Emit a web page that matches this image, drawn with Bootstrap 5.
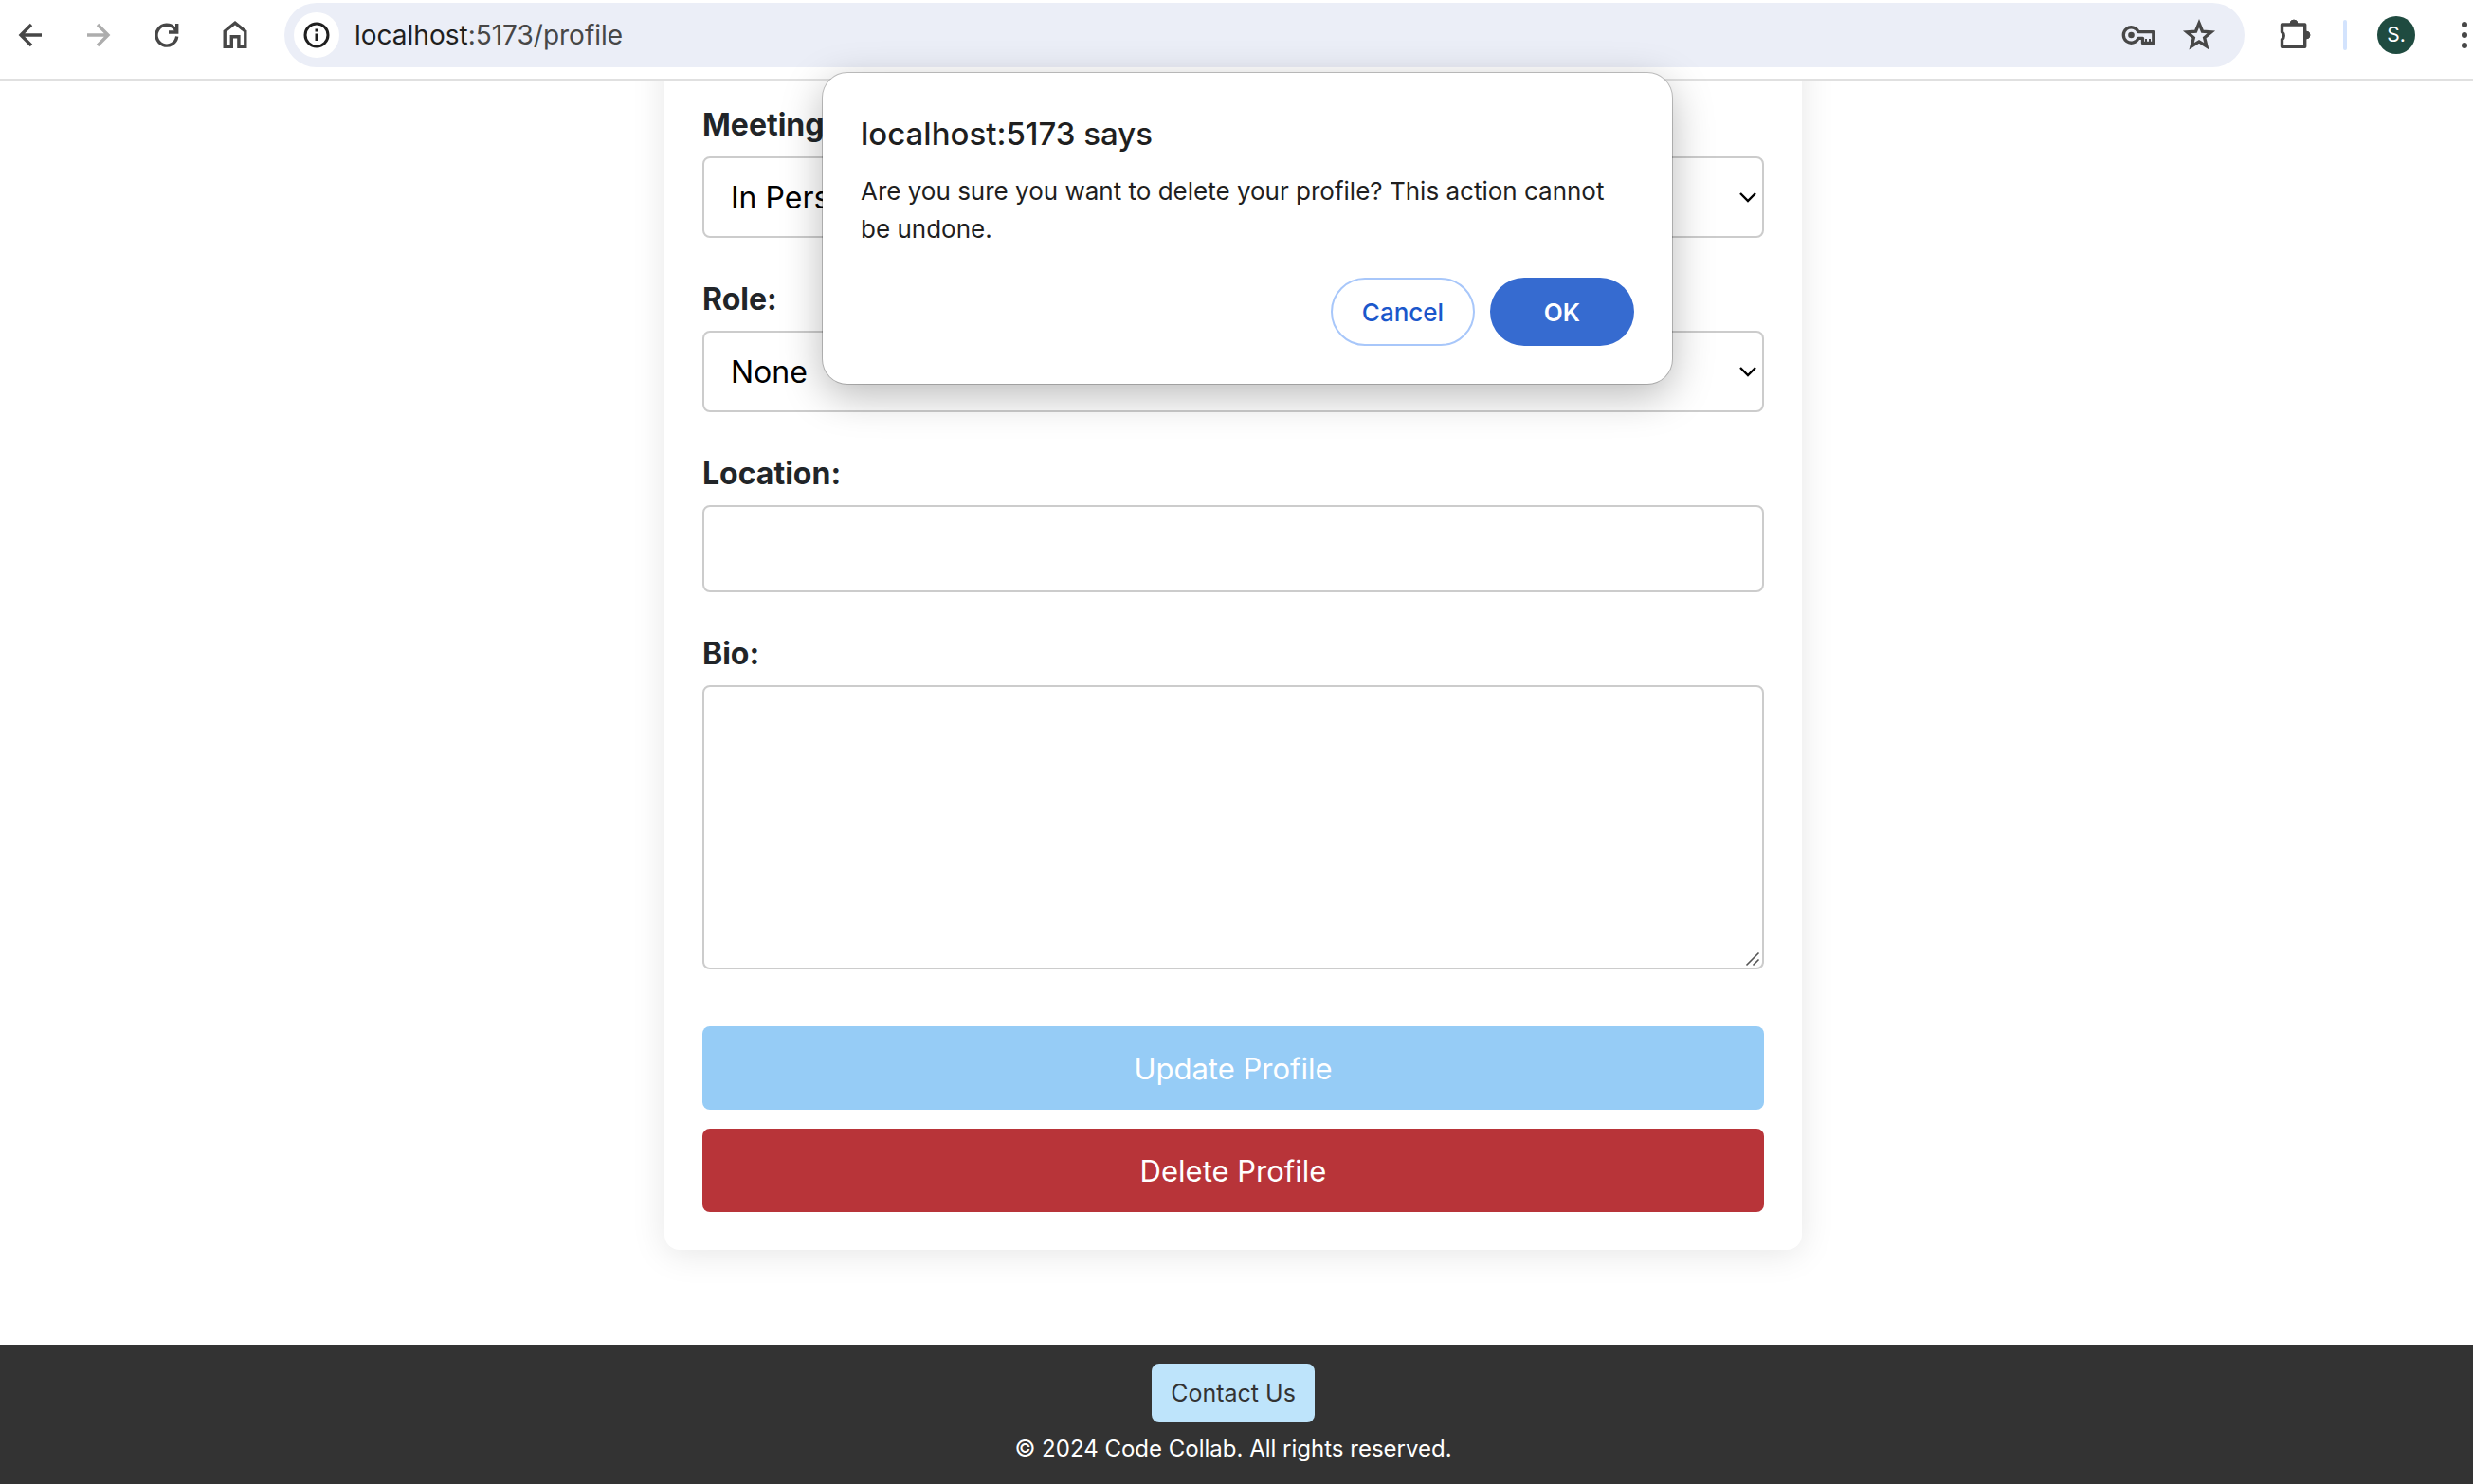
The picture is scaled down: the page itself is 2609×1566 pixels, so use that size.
<!DOCTYPE html>
<html lang="en">
<head>
<meta charset="utf-8">
<meta name="viewport" content="width=device-width, initial-scale=1">
<title>Profile</title>
<link href="https://cdn.jsdelivr.net/npm/bootstrap@5.3.0/dist/css/bootstrap.min.css" rel="stylesheet">
<style>
  body { font-family: Inter, "Liberation Sans", sans-serif; background: #fff; }
  button { border: 0; background: none; }

  /* Browser toolbar */
  .toolbar { padding: 3px 0 12px 12px; border-bottom: 2px solid #e0e0e0; background: #fff; }
  .nav-tools { gap: 32px; margin-right: 32px; }
  .tool { width: 40px; height: 40px; padding: 0; color: #474747; }
  .tool svg { display: block; width: 40px; height: 40px; }
  .tool:disabled { color: #adadad; }
  .omnibox { height: 68px; padding: 0 28px 0 10px; border-radius: 34px; background: #ebeef7; }
  .site-info { width: 48px; height: 48px; padding: 0; border-radius: 50%; background: #fff; color: #1f1f1f; }
  .site-info svg { display: block; width: 48px; height: 48px; }
  .address { margin-left: 16px; font-size: 28px; color: #474747; text-decoration: none; }
  .address span { color: #1f1f1f; }
  .omni-tools { gap: 24px; }
  .extensions { margin-left: 34px; }
  .divider { width: 4px; height: 32px; margin: 0 32px 0 30px; border-radius: 2px; background: #d3e3fd; }
  .avatar { width: 40px; height: 40px; padding: 0; border-radius: 50%; background: #1f4b40; color: #fff; font-size: 21px; line-height: 40px; }
  .more { width: 18px; margin-left: 43px; }
  .more svg { width: 18px; }

  /* Profile form */
  .page-main { padding: 0 7px 100px 0; overflow: hidden; }
  .profile-card { max-width: 1200px; margin-top: -40px; padding: 64px 40px 40px; border-radius: 16px; background: #fff; box-shadow: 0 4px 36px rgba(0, 0, 0, .1); }
  .field { margin-bottom: 42px; }
  .field label { display: block; margin-bottom: 10px; font-size: 32px; line-height: 46px; font-weight: 700; color: #212529; }
  .field-box { display: block; width: 100%; border: 2px solid #ccc; border-radius: 8px; background-color: #fff; color: #000; font-size: 32px; }
  select.field-box { height: 86px; padding: 2px 28px 0; appearance: none; background-repeat: no-repeat; background-position: right 5px center;
    background-image: url("data:image/svg+xml,%3Csvg xmlns='http://www.w3.org/2000/svg' width='20' height='12' viewBox='0 0 20 12'%3E%3Cpath d='M2 2l8 8 8-8' fill='none' stroke='%23000' stroke-width='2.4'/%3E%3C/svg%3E"); }
  input.field-box { height: 92px; padding: 0 28px; }
  textarea.field-box { height: 300px; padding: 20px 28px; resize: none; background-repeat: no-repeat; background-position: right 2px bottom 1px;
    background-image: url("data:image/svg+xml,%3Csvg xmlns='http://www.w3.org/2000/svg' width='16' height='16' viewBox='0 0 16 16'%3E%3Cpath d='M1.500 14.500l13-13M8.500 14.500l6-6' fill='none' stroke='%23555' stroke-width='1.600'/%3E%3C/svg%3E"); }
  .form-actions { gap: 20px; padding-top: 18px; }
  .action { height: 88px; padding: 2px 0 0; border-radius: 8px; font-size: 31px; color: #fff; }
  .action-update { background: #96ccf6; }
  .action-delete { background: #b83439; }

  /* Footer */
  .page-footer { padding: 20px 7px 18px 0; gap: 10px; background: #333; color: #fff; }
  .contact { padding: 0 20px; border-radius: 8px; background: #bee4fb; color: #333; font-size: 25px; line-height: 62px; text-decoration: none; }
  .copyright { font-size: 24px; line-height: 36px; }

  /* Confirmation prompt, floating over the page and the toolbar */
  .prompt { position: absolute; top: 77px; left: 868px; width: 896px; padding: 44px 40px 40px; border-radius: 26px; background: #fff; color: #1f1f1f;
    box-shadow: 0 0 0 1px rgba(0, 0, 0, .22), 0 12px 44px rgba(0, 0, 0, .28); }
  .prompt h1 { margin: 0 0 21px; font-size: 33px; line-height: 40px; font-weight: 500; }
  .prompt p { margin: 0 8px 31px 0; font-size: 26px; line-height: 40px; }
  .prompt-actions { gap: 16px; }
  .pill { width: 152px; height: 72px; border-radius: 36px; font-size: 26px; font-weight: 500; }
  .pill-cancel { border: 2px solid #a8c7fa; color: #1a57cb; }
  .pill-ok { background: #366bd0; color: #fff; font-weight: 600; }
</style>
<script src="https://cdn.jsdelivr.net/npm/bootstrap@5.3.0/dist/js/bootstrap.bundle.min.js"></script>
</head>
<body class="position-relative d-flex flex-column min-vh-100">

<header class="toolbar d-flex align-items-center">
  <div class="nav-tools d-flex">
    <button class="tool" type="button" aria-label="Back"><svg viewBox="0 0 40 40" fill="none" stroke="currentColor" stroke-width="3.400"><path d="M32 20H10.500M21 9L10 20l11 11"/></svg></button>
    <button class="tool" type="button" aria-label="Forward" disabled><svg viewBox="0 0 40 40" fill="none" stroke="currentColor" stroke-width="3.400"><path d="M8 20h21.500M19 9l11 11-11 11"/></svg></button>
    <button class="tool" type="button" aria-label="Reload"><svg viewBox="0 0 40 40" fill="none" stroke="currentColor" stroke-width="3.400"><path d="M30.700 21.500a10.900 10.900 0 1 1-2.600-8.500l2 2.500M30.700 8v9H22"/></svg></button>
    <button class="tool" type="button" aria-label="Home"><svg viewBox="0 0 40 40" fill="none" stroke="currentColor" stroke-width="3.400"><path d="M9.200 32.300V16L20 7.200 30.800 16v16.300h-6.900V21.700h-7.600v10.600z"/></svg></button>
  </div>
  <div class="omnibox d-flex align-items-center flex-grow-1">
    <button class="site-info" type="button" aria-label="Site information"><svg viewBox="0 0 48 48"><circle cx="24" cy="24" r="12" fill="none" stroke="currentColor" stroke-width="3"/><path d="M22.500 22.500h3V30h-3zM22.500 17.500h3v3h-3z" fill="currentColor"/></svg></button>
    <a class="address me-auto" href="#"><span>localhost</span>:5173/profile</a>
    <div class="omni-tools d-flex">
      <button class="tool" type="button" aria-label="Passwords"><svg viewBox="0 0 40 40"><path d="M20 16.700a8.200 8.200 0 1 0 0 6.600h4.500v5.200h11.300V16.700z" fill="none" stroke="currentColor" stroke-width="3.300" stroke-linejoin="round"/><circle cx="12.500" cy="20" r="3.300" fill="currentColor"/><path d="M28 28v-4M32 28v-4" stroke="currentColor" stroke-width="2"/></svg></button>
      <button class="tool" type="button" aria-label="Bookmark"><svg viewBox="0 0 40 40"><path d="M20 7.500l3.500 8.600 9.300.7-7.100 6 2.200 9L20 26.900l-7.900 4.900 2.200-9-7.100-6 9.300-.7z" fill="none" stroke="currentColor" stroke-width="3.400"/></svg></button>
    </div>
  </div>
  <button class="tool extensions" type="button" aria-label="Extensions"><svg viewBox="0 0 40 40"><path d="M5.500 9h24.200v23.300H5.500v-7.500a5.400 5.400 0 0 0 0-8z" fill="none" stroke="currentColor" stroke-width="3.400" stroke-linejoin="round"/><path d="M14 8a4 4 0 0 1 8 0zM31 16a4 4 0 0 1 0 8z" fill="currentColor" stroke="currentColor"/></svg></button>
  <span class="divider"></span>
  <button class="avatar" type="button">S.</button>
  <button class="tool more" type="button" aria-label="Menu"><svg viewBox="0 0 18 40" fill="currentColor"><circle cx="9" cy="9" r="3"/><circle cx="9" cy="20" r="3"/><circle cx="9" cy="31" r="3"/></svg></button>
</header>

<main class="page-main">
  <form class="profile-card mx-auto">
    <div class="field">
      <label for="meeting">Meeting</label>
      <select class="field-box" id="meeting"><option>In Person</option></select>
    </div>
    <div class="field">
      <label for="role">Role:</label>
      <select class="field-box" id="role"><option>None</option></select>
    </div>
    <div class="field">
      <label for="location">Location:</label>
      <input class="field-box" id="location" type="text">
    </div>
    <div class="field">
      <label for="bio">Bio:</label>
      <textarea class="field-box" id="bio"></textarea>
    </div>
    <div class="form-actions d-grid">
      <button class="action action-update" type="button">Update Profile</button>
      <button class="action action-delete" type="button">Delete Profile</button>
    </div>
  </form>
</main>

<footer class="page-footer d-flex flex-column align-items-center flex-grow-1">
  <a class="contact" href="#">Contact Us</a>
  <div class="copyright">© 2024 Code Collab. All rights reserved.</div>
</footer>

<div class="prompt" role="dialog" aria-labelledby="prompt-title">
  <h1 id="prompt-title">localhost:5173 says</h1>
  <p>Are you sure you want to delete your profile? This action cannot be undone.</p>
  <div class="prompt-actions d-flex justify-content-end">
    <button class="pill pill-cancel" type="button">Cancel</button>
    <button class="pill pill-ok" type="button">OK</button>
  </div>
</div>
</body>
</html>
